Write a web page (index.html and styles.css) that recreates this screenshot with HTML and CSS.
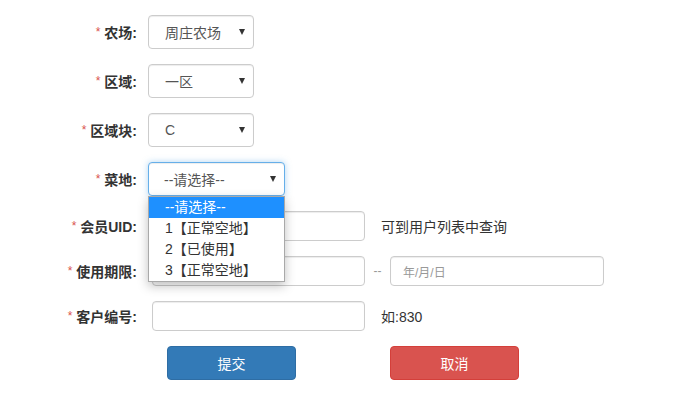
FILE: index.html
```html
<!DOCTYPE html>
<html lang="zh-CN">
<head>
<meta charset="utf-8">
<title>菜地分配</title>
<link rel="stylesheet" href="styles.css">
</head>
<body>
<form class="form">
  <div class="row row-sel">
    <label class="lbl"><span class="req">*</span> 农场:</label>
    <div class="sel w-sm">周庄农场<span class="arrow"></span></div>
  </div>
  <div class="row row-sel">
    <label class="lbl"><span class="req">*</span> 区域:</label>
    <div class="sel w-sm">一区<span class="arrow"></span></div>
  </div>
  <div class="row row-sel">
    <label class="lbl"><span class="req">*</span> 区域块:</label>
    <div class="sel w-sm">C<span class="arrow"></span></div>
  </div>
  <div class="row row-sel">
    <label class="lbl"><span class="req">*</span> 菜地:</label>
    <div class="sel-wrap">
      <div class="sel w-lg focus">--请选择--<span class="arrow"></span></div>
      <ul class="dropdown">
        <li class="opt active">--请选择--</li>
        <li class="opt">1【正常空地】</li>
        <li class="opt">2【已使用】</li>
        <li class="opt">3【正常空地】</li>
      </ul>
    </div>
  </div>
  <div class="row row-inp">
    <label class="lbl"><span class="req">*</span> 会员UID:</label>
    <div class="inp"></div>
    <span class="help">可到用户列表中查询</span>
  </div>
  <div class="row row-inp">
    <label class="lbl"><span class="req">*</span> 使用期限:</label>
    <div class="inp"></div>
    <span class="dash">--</span>
    <div class="inp inp-date"><span class="ph">年/月/日</span></div>
  </div>
  <div class="row row-inp">
    <label class="lbl"><span class="req">*</span> 客户编号:</label>
    <div class="inp"></div>
    <span class="help">如:830</span>
  </div>
  <div class="row row-btn">
    <button type="button" class="btn btn-primary">提交</button>
    <button type="button" class="btn btn-danger">取消</button>
  </div>
</form>
</body>
</html>
```

FILE: styles.css
```css
html, body {
  margin: 0;
  padding: 0;
  background: #fff;
}
body {
  font-family: "Liberation Sans", "Noto Sans CJK SC", sans-serif;
  font-size: 14px;
  color: #333;
}
.form {
  display: flex;
  flex-direction: column;
  gap: 15px;
  padding-top: 15px;
}
.row {
  display: flex;
  align-items: center;
}
.row-sel { height: 34px; }
.row-inp { height: 30px; }
.row-btn { height: 34px; }

.lbl {
  width: 137px;
  flex-shrink: 0;
  text-align: right;
  font-weight: bold;
  color: #333;
  white-space: nowrap;
}
.req {
  color: #d9534f;
  font-weight: normal;
  font-size: 12px;
  position: relative;
  top: -2px;
}

.sel-wrap {
  position: relative;
  margin-left: 11px;
}
.sel {
  box-sizing: border-box;
  height: 34px;
  border: 1px solid #ccc;
  border-radius: 4px;
  display: flex;
  align-items: center;
  justify-content: space-between;
  padding: 0 8px 0 16px;
  color: #555;
  background: #fff;
  box-shadow: inset 0 1px 1px rgba(0,0,0,.075);
}
.row-sel > .sel { margin-left: 11px; }
.w-sm { width: 106px; }
.w-lg { width: 137px; padding-left: 15px; }
.sel.focus {
  border-color: #66afe9;
  box-shadow: inset 0 1px 1px rgba(0,0,0,.075), 0 0 6px rgba(102,175,233,.5);
}
.arrow {
  width: 0;
  height: 0;
  border-left: 3.5px solid transparent;
  border-right: 3.5px solid transparent;
  border-top: 6px solid #333;
}

.dropdown {
  position: absolute;
  top: 34px;
  left: 0;
  width: 137px;
  box-sizing: border-box;
  margin: 0;
  padding: 0;
  list-style: none;
  background: #fff;
  border: 1px solid #a9a9a9;
  box-shadow: 0 4px 10px rgba(0,0,0,.25);
  z-index: 5;
}
.opt {
  height: 21px;
  line-height: 21px;
  padding-left: 16px;
  color: #333;
  white-space: nowrap;
}
.opt.active {
  background: #1e90ff;
  color: #fff;
}

.inp {
  box-sizing: border-box;
  width: 213px;
  height: 30px;
  margin-left: 15px;
  border: 1px solid #ccc;
  border-radius: 4px;
  background: #fff;
  box-shadow: inset 0 1px 1px rgba(0,0,0,.075);
  display: flex;
  align-items: center;
  padding-left: 12px;
}
.inp-date {
  width: 214px;
  margin-left: 0;
}
.ph {
  font-size: 12px;
  color: #999;
}
.dash {
  width: 25px;
  text-align: center;
  color: #999;
  font-size: 12px;
}
.help {
  margin-left: 16px;
  color: #333;
}

.btn {
  box-sizing: border-box;
  width: 129px;
  height: 34px;
  border: 1px solid transparent;
  border-radius: 4px;
  color: #fff;
  font-family: inherit;
  font-size: 14px;
  padding: 0;
  cursor: pointer;
}
.btn-primary {
  margin-left: 167px;
  background: #337ab7;
  border-color: #2e6da4;
}
.btn-danger {
  margin-left: 94px;
  background: #d9534f;
  border-color: #d43f3a;
}
```
